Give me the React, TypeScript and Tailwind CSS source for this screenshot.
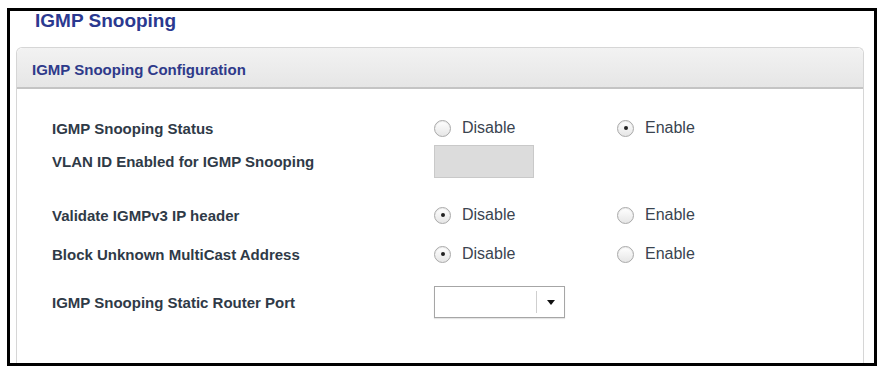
import React from "react";

type RadioProps = { checked: boolean; label: string };

const Radio: React.FC<RadioProps> = ({ checked, label }) => (
  <div className="flex items-center gap-[11px]">
    <span className="w-[17px] h-[17px] rounded-full border border-[#a9a9a9] bg-gradient-to-b from-white to-[#e6e6e6] shadow-[inset_0_1px_1px_rgba(0,0,0,0.08)] flex items-center justify-center">
      {checked && <span className="w-[4px] h-[4px] rounded-full bg-[#222]" />}
    </span>
    <span className="text-[16px] text-[#3a4450] leading-none">{label}</span>
  </div>
);

const Label: React.FC<{ children: React.ReactNode }> = ({ children }) => (
  <div className="w-[382px] text-[15px] font-bold text-[#2f3a47] leading-none">{children}</div>
);

const RadioPair: React.FC<{ enabled: boolean }> = ({ enabled }) => (
  <div className="flex">
    <div className="w-[183px]">
      <Radio checked={!enabled} label="Disable" />
    </div>
    <Radio checked={enabled} label="Enable" />
  </div>
);

const App: React.FC = () => {
  return (
    <div
      className="w-[879px] h-[370px] bg-white pt-[8px] pl-[7px] overflow-hidden"
      style={{ fontFamily: '"Liberation Sans", Arial, sans-serif' }}
    >
      <div className="w-[870px] h-[358px] border-[3px] border-black overflow-hidden bg-white">
        {/* Page title */}
        <h1 className="pl-[25px] text-[19px] leading-[19px] font-bold text-[#2b3990]">
          IGMP Snooping
        </h1>

        {/* Config panel */}
        <div className="mt-[17px] ml-[6px] mr-[10px] h-[400px] rounded-t-[6px] border-x border-t border-[#d6d6d6]">
          <div className="h-[41px] pl-[15px] pt-[14px] rounded-t-[6px] bg-gradient-to-b from-[#f2f2f2] to-[#e6e6e6] border-b-2 border-[#c4c4c4]">
            <h2 className="text-[15px] leading-[15px] font-bold text-[#2e3a8a]">
              IGMP Snooping Configuration
            </h2>
          </div>

          <div className="pl-[35px]">
            <div className="mt-[25px] h-[28px] flex items-center">
              <Label>IGMP Snooping Status</Label>
              <RadioPair enabled={true} />
            </div>

            <div className="mt-[3px] h-[33px] flex items-center">
              <Label>VLAN ID Enabled for IGMP Snooping</Label>
              <div className="w-[100px] h-[33px] bg-[#dcdcdc] border border-[#c9c9c9]" />
            </div>

            <div className="mt-[23px] h-[28px] flex items-center">
              <Label>Validate IGMPv3 IP header</Label>
              <RadioPair enabled={false} />
            </div>

            <div className="mt-[11px] h-[28px] flex items-center">
              <Label>Block Unknown MultiCast Address</Label>
              <RadioPair enabled={false} />
            </div>

            <div className="mt-[18px] h-[32px] flex items-center">
              <Label>IGMP Snooping Static Router Port</Label>
              <div className="w-[131px] h-[32px] bg-white border border-[#a6a6a6] shadow-[0_1px_1px_rgba(0,0,0,0.1)] flex items-center">
                <div className="flex-1" />
                <div className="w-px h-[22px] bg-[#cfcfcf]" />
                <div className="w-[27px] flex items-center justify-center">
                  <svg width="8" height="5" viewBox="0 0 8 5">
                    <path d="M0 0 L8 0 L4 5 Z" fill="#111" />
                  </svg>
                </div>
              </div>
            </div>
          </div>
        </div>
      </div>
    </div>
  );
};

export default App;
